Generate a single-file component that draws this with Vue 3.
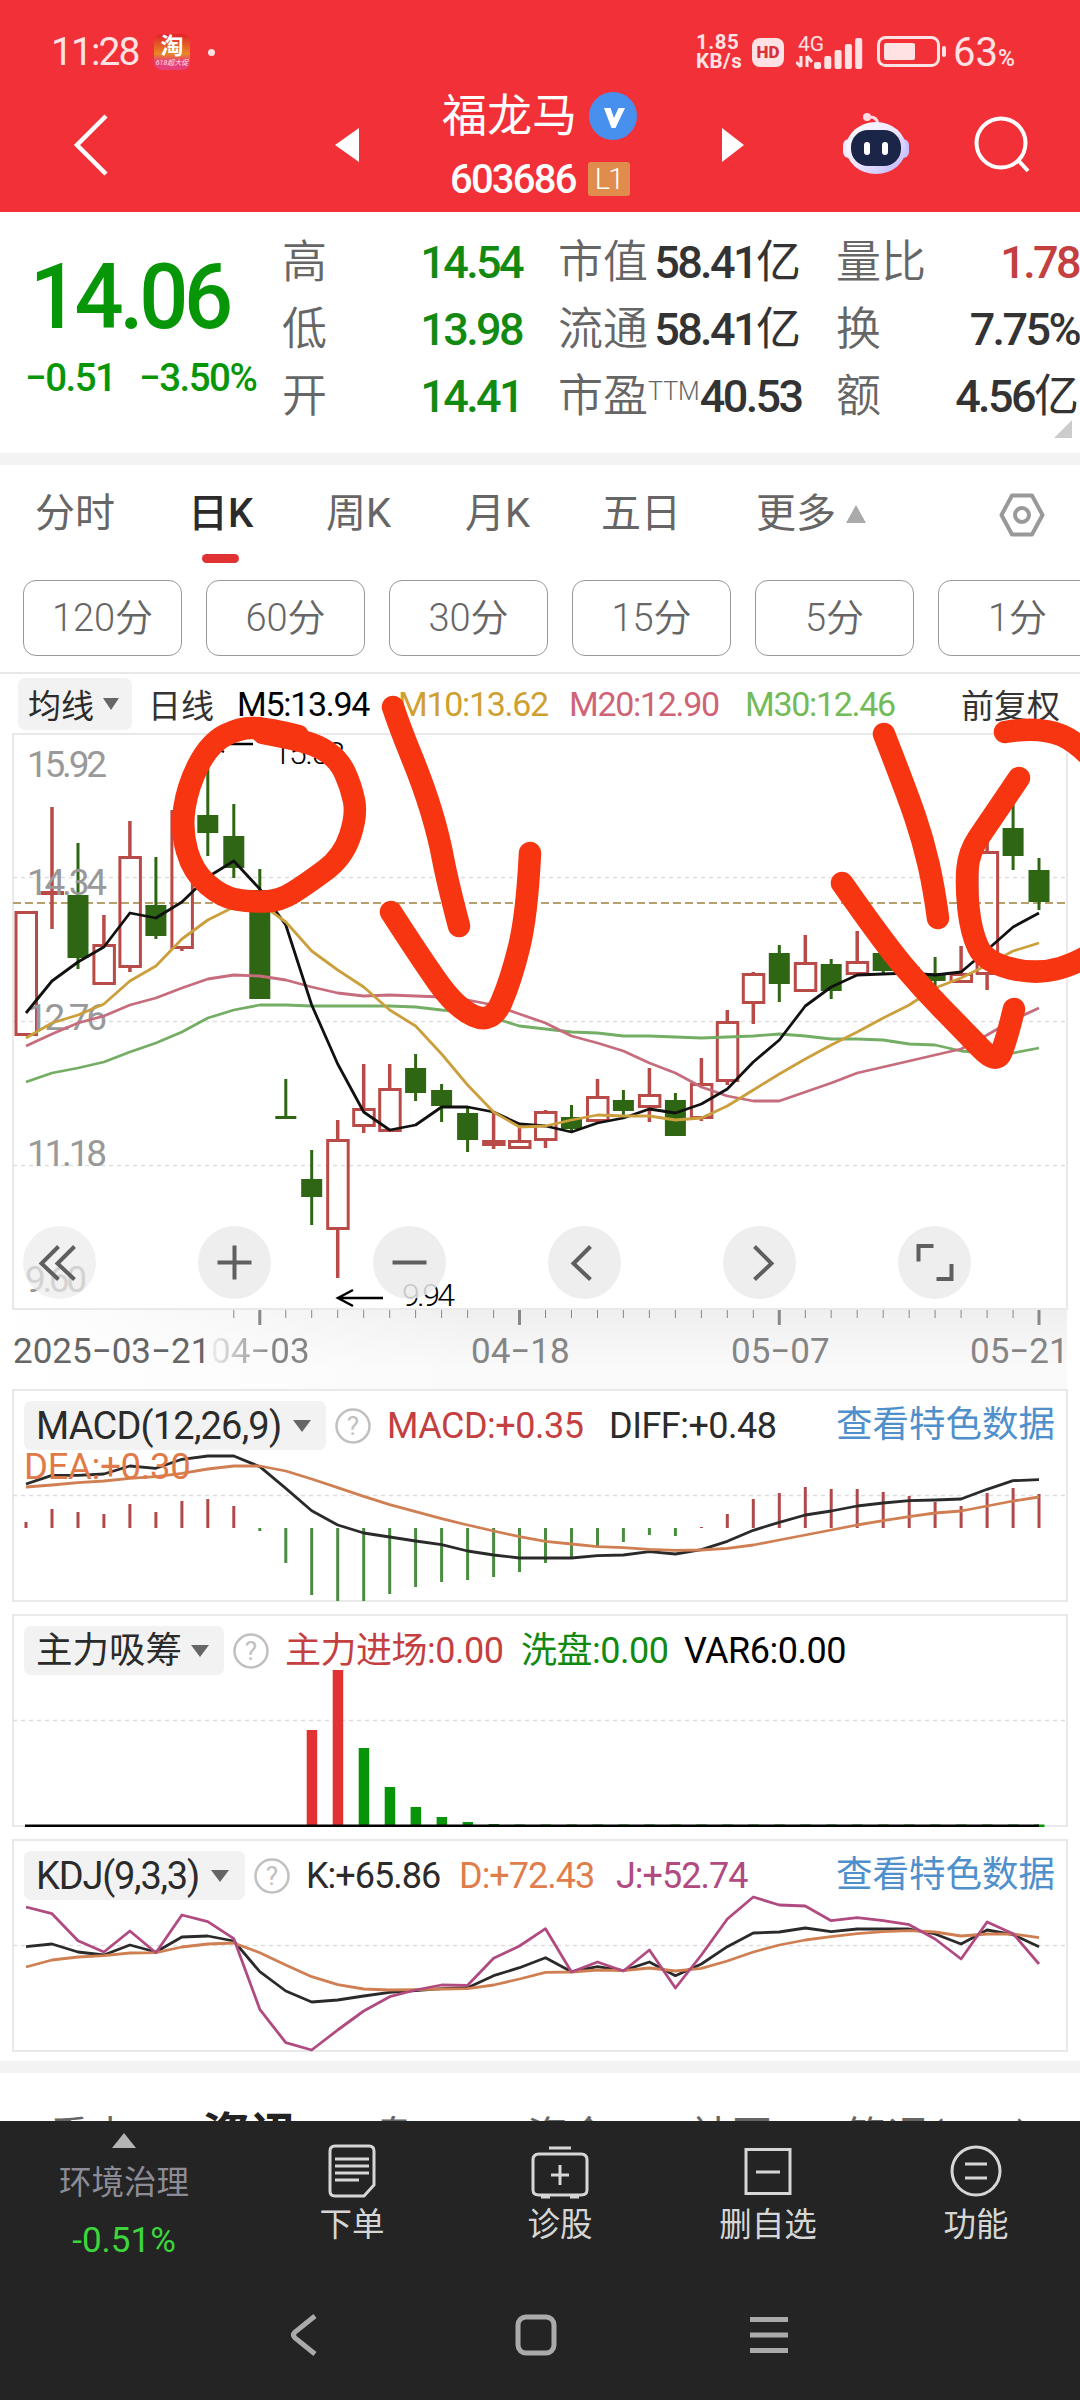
<template>
  <div class="page">
    <!-- Status bar + title -->
    <header class="header">
      <div class="status">
        <span class="clock">11:28</span>
        <span class="taobao"><b>淘</b><i>618超大促</i></span>
        <span class="dot"></span>
        <span class="speed">1.85<br />KB/s</span>
        <span class="hd">HD</span>
        <svg class="signal" width="68" height="36" viewBox="0 0 68 36">
          <text x="2" y="17" class="fourg" textLength="26">4G</text>
          <path d="M5 22v11M0 28l5 5M11 33V22M11 22l5 6" stroke="#ffe3e4" stroke-width="3" fill="none" />
          <rect v-for="(h, i) in [7, 13, 19, 25, 31]" :key="i" :x="18 + i * 10.3" :y="35 - h" width="7" :height="h" rx="2" fill="#ffe3e4" />
        </svg>
        <svg class="battery" width="70" height="32" viewBox="0 0 70 32">
          <rect x="1.5" y="1.5" width="60" height="28" rx="7" fill="none" stroke="#ffe3e4" stroke-width="3" />
          <rect x="7" y="7" width="31" height="17" rx="2" fill="#ffe3e4" />
          <rect x="65" y="10" width="4" height="11" rx="2" fill="#ffe3e4" />
        </svg>
        <span class="percent">63<small>%</small></span>
      </div>
      <div class="title-row">
        <svg class="back" width="36" height="62" viewBox="0 0 36 62"><path d="M33 2L4 31l29 29" fill="none" stroke="#fff" stroke-width="4.500" /></svg>
        <svg class="prev" width="24" height="34"><path d="M24 0v34L0 17z" fill="#fff" /></svg>
        <div class="stock">
          <div class="name">
            福龙马
            <svg width="48" height="48" viewBox="0 0 48 48">
              <circle cx="24" cy="24" r="24" fill="#4790ee" />
              <path d="M15 16h6.500l3.500 10 4.500-10H36L26.500 36h-4z" fill="#fff" />
            </svg>
          </div>
          <div class="code">603686<span class="level">L1</span></div>
        </div>
        <svg class="next" width="24" height="34"><path d="M0 0v34L22 17z" fill="#fff" /></svg>
        <svg class="robot" width="66" height="62" viewBox="0 0 66 62">
          <defs>
            <linearGradient id="head" x1="0" y1="0" x2="1" y2="1">
              <stop offset="0" stop-color="#fff" />
              <stop offset=".5" stop-color="#eee6ff" />
              <stop offset="1" stop-color="#b9b4fa" />
            </linearGradient>
          </defs>
          <path d="M25 4q9-1 10 7" fill="none" stroke="#ffd9e4" stroke-width="3" />
          <circle cx="24" cy="4" r="4" fill="#ffd9e4" />
          <rect x="0" y="26" width="12" height="19" rx="6" fill="#f3e9ff" />
          <rect x="54" y="26" width="12" height="19" rx="6" fill="#c9c2ff" />
          <ellipse cx="33" cy="35" rx="30" ry="26" fill="url(#head)" />
          <rect x="8" y="17" width="50" height="36" rx="17" fill="#1b2547" />
          <rect x="21" y="29" width="6" height="13" rx="3" fill="#fff" />
          <rect x="39" y="29" width="6" height="13" rx="3" fill="#fff" />
        </svg>
        <svg class="search" width="56" height="58" viewBox="0 0 56 58">
          <circle cx="27" cy="27" r="24.5" fill="none" stroke="#fff" stroke-width="4" />
          <path d="M44 44l10 11" stroke="#fff" stroke-width="4" />
        </svg>
      </div>
    </header>

    <!-- Quote -->
    <section class="quote">
      <div class="price">
        <div class="last">14.06</div>
        <div class="change"><span>−0.51</span><span>−3.50%</span></div>
      </div>
      <dl v-for="(col, c) in quote" :key="c" class="quote-col">
        <div v-for="q in col" :key="q.label" class="quote-cell">
          <dt>{{ q.label }}<sup v-if="q.sup">{{ q.sup }}</sup></dt>
          <dd :class="q.color">{{ q.value }}<em v-if="q.unit">{{ q.unit }}</em></dd>
        </div>
      </dl>
      <svg class="corner" width="18" height="18"><path d="M18 0v18H0z" fill="#ccc" /></svg>
    </section>

    <!-- Chart tabs -->
    <nav class="tabs">
      <span v-for="t in tabs" :key="t" :class="{ active: t === '日K' }">{{ t }}</span>
      <span class="more">更多<svg width="20" height="18"><path d="M10 0l10 18H0z" fill="#aaa" /></svg></span>
      <svg class="settings" width="46" height="44" viewBox="0 0 46 44">
        <path d="M13 2.500h20L43.500 22 33 41.500H13L2.500 22z" fill="none" stroke="#999" stroke-width="4" stroke-linejoin="round" />
        <circle cx="23" cy="22" r="7" fill="none" stroke="#999" stroke-width="4" />
      </svg>
    </nav>
    <div class="periods">
      <button v-for="p in periods" :key="p">{{ p }}</button>
    </div>

    <!-- Moving averages -->
    <div class="ma-row">
      <span class="chip small">均线<svg width="16" height="12"><path d="M0 0h16L8 12z" fill="#666" /></svg></span>
      <span class="ma-name">日线</span>
      <span class="ma black">M5:13.94</span>
      <span class="ma yellow">M10:13.62</span>
      <span class="ma pink">M20:12.90</span>
      <span class="ma light-green">M30:12.46</span>
      <span class="fq">前复权</span>
    </div>

    <!-- Candles -->
    <div class="main-chart">
      <svg width="1080" height="578" viewBox="0 733 1080 578">
        <path d="M13 734H1067V1309H13z" fill="none" stroke="#e9e9e9" stroke-width="2" />
        <path d="M13 877.500H1066M13 1021.500H1066M13 1165.500H1066" class="grid" />
        <path d="M13 903H1066" stroke="#b8a06c" stroke-width="2" stroke-dasharray="8 4" />
        <g v-for="(k, i) in candles" :key="i">
          <template v-if="k[0] === 'r'">
            <path :d="`M${x(i)} ${k[1]}V${k[3]}M${x(i)} ${k[4]}V${k[2]}`" stroke="#b84a48" stroke-width="3.500" />
            <rect :x="x(i) - 10" :y="k[3] + 1.5" width="20.500" :height="Math.max(k[4] - k[3] - 3, 1)" :fill="i === 18 ? '#d93a3a' : 'none'" stroke="#b84a48" stroke-width="3" />
          </template>
          <template v-else>
            <path :d="`M${x(i)} ${k[1]}V${k[2]}`" stroke="#2f6614" stroke-width="3" />
            <rect :x="x(i) - 10.5" :y="k[3]" width="21" :height="k[4] - k[3]" fill="#2f6614" />
          </template>
        </g>
        <g class="scale">
          <text x="27" y="777" textLength="80">15.92</text>
          <text x="27" y="895" textLength="80">14.34</text>
          <text x="27" y="1030" textLength="80">12.76</text>
          <text x="27" y="1166" textLength="80">11.18</text>
          <text x="25" y="1292" textLength="62">9.60</text>
        </g>
        <path :d="line(ma30)" class="curve" stroke="#74ad64" />
        <path :d="line(ma20)" class="curve" stroke="#c66c7c" />
        <path :d="line(ma5)" class="curve" stroke="#111" />
        <path :d="line(ma10)" class="curve" stroke="#cb9f3c" />
        <g class="mark">
          <path d="M253 744H208M224 736l-16 8 16 8M383 1298H338M353 1290l-15 8 15 8" fill="none" stroke="#000" stroke-width="2.500" />
          <text x="273" y="764" textLength="72">15.58</text>
          <text x="402" y="1306" textLength="53">9.94</text>
        </g>
      </svg>
      <div class="controls">
        <svg v-for="(d, i) in controls" :key="i" width="73" height="73" viewBox="-36.5 -36.5 73 73">
          <circle r="36.500" fill="#ebebeb" :fill-opacity="i === 0 ? 0.7 : 0.85" />
          <path :d="d" fill="none" stroke="#5f5f5f" stroke-width="4" />
        </svg>
      </div>
    </div>

    <!-- Date axis -->
    <div class="axis">
      <svg width="1080" height="16">
        <path v-for="i in 32" :key="i" :d="`M${x(i + 7)} 0v${i % 10 === 2 ? 16 : 9}`" stroke="#888" :stroke-width="i % 10 === 2 ? 3 : 1" />
      </svg>
      <div class="dates">
        <span class="first">2025−03−21</span>
        <span class="fade">04−03</span>
        <span>04−18</span>
        <span class="may">05−07</span>
        <span>05−21</span>
      </div>
    </div>

    <!-- Indicators -->
    <section v-for="p in panels" :key="p.name" class="panel">
      <svg class="plot" width="1080" height="213">
        <path d="M13 1H1067V212H13z" fill="none" stroke="#e9e9e9" stroke-width="2" />
        <path d="M13 106.500H1066" class="grid" />
        <rect v-for="(b, i) in p.bars" :key="i" :x="b.x" :y="b.y" :width="b.w" :height="b.h" :fill="b.color" />
        <path v-for="(l, i) in p.lines" :key="'l' + i" :d="l.d" class="curve" :stroke="l.color" />
      </svg>
      <div class="legend">
        <span class="chip" :class="p.cls">{{ p.name }}<svg width="18" height="12"><path d="M0 0h18L9 12z" fill="#666" /></svg></span>
        <svg class="help" width="36" height="36" viewBox="0 0 36 36">
          <circle cx="18" cy="18" r="16.500" fill="none" stroke="#c0c0c0" stroke-width="2.500" />
          <text x="18" y="27" text-anchor="middle" fill="#c0c0c0" font-size="26">?</text>
        </svg>
        <span v-for="v in p.values" :key="v.text" class="value" :class="v.cls">{{ v.text }}</span>
        <a v-if="p.link">查看特色数据</a>
      </div>
      <div v-if="p.second" class="second">{{ p.second }}</div>
    </section>

    <!-- News tabs, cut by the toolbar -->
    <div class="news">
      <span v-for="n in news" :key="n" :class="{ active: n === '资讯' }">{{ n }}</span>
    </div>

    <footer class="toolbar">
      <div class="actions">
        <div class="sector">
          <svg width="24" height="15"><path d="M12 0l12 15H0z" fill="#b4b4b4" /></svg>
          <span>环境治理</span>
          <b>-0.51%</b>
        </div>
        <div v-for="a in actions" :key="a.text" class="action">
          <svg width="60" height="56" viewBox="-30 -28 60 56"><path :d="a.icon" fill="none" stroke="#d6d6d6" stroke-width="3" /></svg>
          <span>{{ a.text }}</span>
        </div>
      </div>
      <div class="sysnav">
        <svg width="28" height="42" viewBox="0 0 28 42"><path d="M25 2L5 18q-3 3 0 6l20 16" fill="none" stroke="#aaa" stroke-width="5" /></svg>
        <svg width="42" height="42" viewBox="0 0 42 42"><rect x="3" y="3" width="36" height="36" rx="8" fill="none" stroke="#aaa" stroke-width="5" /></svg>
        <svg width="40" height="42" viewBox="0 0 40 42"><path d="M1 5.500h38M1 21h38M1 36.500h38" stroke="#aaa" stroke-width="5" /></svg>
      </div>
    </footer>

    <!-- Freehand pen marks over the chart -->
    <svg class="pen" width="1080" height="400" viewBox="0 690 1080 400">
      <path v-for="(s, i) in strokes" :key="i" :d="smooth(s)" />
    </svg>
  </div>
</template>

<script setup>
const x = (i) => +(26 + i * 25.975).toFixed(1);

const line = (values, top = 0, k = 1) =>
  values.map((v, i) => `${i ? "L" : "M"}${x(i)} ${(v * k - top).toFixed(1)}`).join("");

// curve through the middle of each pair of points
const smooth = (pts) => {
  let d = `M${pts[0]}`;
  for (let i = 1; i < pts.length - 1; i++) {
    const end =
      i === pts.length - 2
        ? pts[i + 1]
        : [(pts[i][0] + pts[i + 1][0]) / 2, (pts[i][1] + pts[i + 1][1]) / 2];
    d += `Q${pts[i]} ${end}`;
  }
  return d;
};

const quote = [
  [
    { label: "高", value: "14.54", color: "green" },
    { label: "低", value: "13.98", color: "green" },
    { label: "开", value: "14.41", color: "green" },
  ],
  [
    { label: "市值", value: "58.41", unit: "亿" },
    { label: "流通", value: "58.41", unit: "亿" },
    { label: "市盈", sup: "TTM", value: "40.53" },
  ],
  [
    { label: "量比", value: "1.78", color: "red" },
    { label: "换", value: "7.75%" },
    { label: "额", value: "4.56", unit: "亿" },
  ],
];
const tabs = ["分时", "日K", "周K", "月K", "五日"];
const periods = ["120分", "60分", "30分", "15分", "5分", "1分"];
const news = ["重点", "资讯", "盘口", "资金", "社区", "简况(F10)"];

// [colour, high, low, body top, body bottom]
const candles = [
  ["r", 911, 1036, 911, 1036],
  ["r", 807, 929, 891, 895],
  ["g", 843, 969, 895, 958],
  ["r", 915, 985, 944, 985],
  ["r", 821, 972, 856, 968],
  ["g", 857, 939, 905, 936],
  ["r", 795, 951, 810, 949],
  ["g", 764, 856, 815, 833],
  ["g", 804, 878, 836, 868],
  ["g", 869, 999, 890, 999],
  ["g", 1079, 1118, 1116, 1119],
  ["g", 1150, 1225, 1179, 1197],
  ["r", 1120, 1278, 1139, 1230],
  ["r", 1064, 1133, 1108, 1127],
  ["r", 1064, 1132, 1088, 1132],
  ["g", 1054, 1101, 1068, 1093],
  ["g", 1084, 1122, 1090, 1106],
  ["g", 1107, 1152, 1113, 1140],
  ["r", 1113, 1149, 1140, 1146],
  ["r", 1127, 1149, 1140, 1149],
  ["r", 1110, 1148, 1111, 1141],
  ["g", 1105, 1131, 1117, 1129],
  ["r", 1079, 1122, 1096, 1122],
  ["g", 1090, 1115, 1100, 1111],
  ["r", 1068, 1122, 1094, 1108],
  ["g", 1093, 1136, 1100, 1136],
  ["r", 1058, 1121, 1083, 1119],
  ["r", 1010, 1085, 1021, 1082],
  ["r", 972, 1024, 973, 1004],
  ["g", 945, 1002, 953, 984],
  ["r", 935, 992, 962, 992],
  ["g", 959, 999, 964, 991],
  ["r", 931, 975, 961, 975],
  ["g", 945, 973, 953, 971],
  ["g", 960, 974, 967, 973],
  ["g", 957, 986, 973, 981],
  ["r", 946, 983, 973, 983],
  ["r", 840, 990, 851, 975],
  ["g", 800, 870, 828, 856],
  ["g", 858, 910, 870, 902],
];
const ma5 = [1013, 981, 962, 947, 913, 918, 902, 877, 861, 889, 925, 1005, 1064, 1112, 1130, 1125, 1107, 1107, 1112, 1124, 1126, 1132, 1123, 1118, 1109, 1113, 1104, 1089, 1062, 1040, 1006, 987, 975, 974, 973, 975, 972, 950, 927, 913];
const ma10 = [1038, 1023, 1015, 1004, 981, 966, 939, 920, 907, 903, 922, 951, 970, 987, 1010, 1026, 1054, 1085, 1112, 1127, 1126, 1120, 1115, 1116, 1116, 1120, 1118, 1106, 1090, 1074, 1059, 1045, 1032, 1018, 1005, 988, 978, 965, 951, 943];
const ma20 = [1046, 1034, 1023, 1016, 1005, 998, 988, 979, 975, 976, 980, 987, 993, 996, 995, 996, 997, 1000, 1005, 1014, 1023, 1036, 1043, 1051, 1063, 1073, 1087, 1096, 1101, 1101, 1092, 1083, 1073, 1067, 1061, 1055, 1049, 1035, 1020, 1008];
const ma30 = [1082, 1073, 1068, 1062, 1052, 1043, 1032, 1018, 1010, 1005, 1005, 1006, 1006, 1006, 1006, 1007, 1010, 1012, 1018, 1026, 1029, 1032, 1033, 1036, 1036, 1037, 1038, 1037, 1036, 1034, 1036, 1039, 1039, 1040, 1044, 1045, 1051, 1053, 1053, 1048];

const controls = [
  "M-1-16L-18 1L-1 17M15-16L-2 1L15 17",
  "M-17 0H17M0-17V17",
  "M-17 0H17",
  "M6-16L-11 1L6 17",
  "M-5-16L12 1L-5 17",
  "M-1-16.500H-16V-1M17 1.500V16.500H2",
];

// MACD: bar ends, zero line at 139
const macdEnds = [133, 120, 123, 125, 115, 123, 112, 110, 117, 142, 174, 206, 212, 212, 205, 198, 193, 191, 188, 183, 174, 169, 158, 153, 146, 147, 138, 125, 110, 104, 98, 100, 100, 103, 107, 113, 117, 104, 99, 105];
const diff = [312, 286, 286, 282, 258, 265, 238, 228, 228, 260, 325, 392, 435, 459, 471, 483, 494, 513, 525, 534, 534, 534, 527, 525, 515, 522, 509, 484, 451, 427, 405, 393, 378, 369, 362, 360, 357, 328, 302, 299];
const dea = [321, 315, 308, 303, 295, 290, 280, 267, 258, 258, 273, 297, 323, 349, 374, 395, 416, 435, 453, 470, 484, 492, 500, 503, 508, 511, 510, 505, 495, 480, 465, 450, 435, 422, 410, 399, 393, 378, 363, 351];

const zhuli = [97, 157, 79, 40, 20, 10, 5, 3];

const kLine = [350, 342, 366, 375, 345, 366, 321, 318, 333, 425, 483, 516, 510, 498, 487, 482, 476, 473, 437, 413, 383, 425, 410, 422, 396, 437, 402, 350, 309, 306, 294, 305, 297, 297, 297, 312, 342, 300, 314, 350];
const dLine = [411, 390, 381, 377, 369, 368, 351, 342, 339, 368, 405, 440, 464, 477, 480, 479, 477, 476, 465, 447, 427, 426, 420, 422, 414, 423, 415, 393, 366, 345, 330, 320, 311, 305, 302, 306, 318, 312, 312, 323];
const jLine = [231, 251, 332, 366, 303, 368, 255, 275, 326, 538, 638, 660, 600, 543, 500, 480, 465, 466, 385, 348, 296, 426, 396, 423, 360, 474, 375, 267, 201, 225, 228, 272, 263, 272, 284, 327, 387, 276, 311, 402];

const panels = [
  {
    name: "MACD(12,26,9)",
    cls: "macd",
    link: true,
    second: "DEA:+0.30",
    values: [
      { text: "MACD:+0.35", cls: "red v-macd" },
      { text: "DIFF:+0.48", cls: "dark v-diff" },
    ],
    bars: macdEnds.map((y, i) => ({
      x: x(i) - 1.5,
      y: Math.min(y, 139),
      w: 3,
      h: Math.abs(y - 139),
      color: y < 139 ? "#b04a4a" : "#4b8c42",
    })),
    lines: [
      { d: line(diff, 9, 1 / 3), color: "#2a2a2a" },
      { d: line(dea, 9, 1 / 3), color: "#cf7f52" },
    ],
  },
  {
    name: "主力吸筹",
    cls: "zhuli",
    values: [
      { text: "主力进场:0.00", cls: "red v-in" },
      { text: "洗盘:0.00", cls: "green v-wash" },
      { text: "VAR6:0.00", cls: "black v-var" },
    ],
    bars: Array.from({ length: 29 }, (_, n) => {
      const h = zhuli[n] ?? 2.5;
      return { x: x(n + 11) - 5, y: 213 - h, w: 10.5, h, color: n < 2 ? "#e23232" : "#089408" };
    }),
    lines: [{ d: "M25 212H1039", color: "#000" }],
  },
  {
    name: "KDJ(9,3,3)",
    cls: "kdj",
    link: true,
    values: [
      { text: "K:+65.86", cls: "dark v-k" },
      { text: "D:+72.43", cls: "orange v-d" },
      { text: "J:+52.74", cls: "purple v-j" },
    ],
    bars: [],
    lines: [
      { d: line(kLine, 9, 1 / 3), color: "#2a2a2a" },
      { d: line(dLine, 9, 1 / 3), color: "#cf7f52" },
      { d: line(jLine, 9, 1 / 3), color: "#b04a80" },
    ],
  },
];

const actions = [
  { text: "下单", icon: "M-17-25H17Q22-25 22-20V14L12 25H-17Q-22 25-22 20V-20Q-22-25-17-25zM-17-12H17M-17-5H17M-17 2H17M-17 9H7" },
  { text: "诊股", icon: "M-21-17H21Q27-17 27-11V19Q27 24 21 24H-21Q-27 24-27 19V-11Q-27-17-21-17zM-11-23H11M-9 4H9M0-6V14M-19 26H-10M10 26H19" },
  { text: "删自选", icon: "M-22-21.500H22V22.500H-22zM-12 1H12" },
  { text: "功能", icon: "M-24 0a24 24 0 1 1 48 0a24 24 0 1 1-48 0M-11-7H11M-11 7H11" },
];

const strokes = [
  [[298, 736], [270, 729], [241, 727], [210, 743], [188, 785], [181, 830], [193, 872], [222, 897], [250, 902], [280, 901], [308, 883], [343, 857], [357, 815], [351, 786], [339, 760], [317, 745], [289, 738], [263, 733]],
  [[393, 707], [400, 728], [424, 787], [439, 837], [447, 880], [459, 926]],
  [[391, 912], [420, 957], [456, 1008], [492, 1024], [511, 980], [527, 915], [530, 853]],
  [[884, 734], [907, 793], [923, 840], [934, 888], [938, 918]],
  [[842, 883], [884, 943], [922, 988], [967, 1034], [996, 1064], [1006, 1042], [1014, 1009]],
  [[1019, 778], [987, 825], [969, 852], [966, 885], [971, 932], [985, 962], [1037, 975], [1084, 961], [1140, 920], [1150, 830], [1084, 745], [1040, 726], [1005, 732]],
];
</script>

<style>
body {
  margin: 0;
  background: #fff;
}
</style>

<style scoped>
.page {
  position: relative;
  width: 1080px;
  height: 2400px;
  overflow: hidden;
  display: flex;
  flex-direction: column;
  background: #fff;
  color: #333;
  font-family: Roboto, "Noto Sans CJK SC", sans-serif;
}
.page > * {
  flex: none;
}
svg {
  display: block;
}

.header {
  height: 212px;
  background: #f23037;
  color: #fff;
}
.status {
  height: 104px;
  display: flex;
  align-items: center;
  color: #ffe3e4;
}
.clock {
  width: 103px;
  margin-left: 51px;
  font-size: 39px;
  letter-spacing: -1.9px;
}
.taobao {
  width: 36px;
  height: 36px;
  border-radius: 8px;
  background: linear-gradient(#e0202a, #e88a24 55%, #e8407a 75%);
  display: flex;
  flex-direction: column;
  align-items: center;
  overflow: hidden;
  white-space: nowrap;
}
.taobao b {
  font-size: 23px;
  line-height: 25px;
  color: #fff;
}
.taobao i {
  font-size: 7px;
  line-height: 9px;
}
.dot {
  width: 7px;
  height: 7px;
  border-radius: 50%;
  background: #ffe3e4;
  margin: 0 481px 0 18px;
}
.speed {
  width: 56px;
  font-size: 20.500px;
  line-height: 19px;
  font-weight: 700;
  letter-spacing: 0.5px;
}
.hd {
  width: 32px;
  height: 29px;
  border-radius: 8px;
  background: #ffe3e4;
  color: #d8323a;
  font-size: 17px;
  font-weight: 900;
  line-height: 29px;
  text-align: center;
}
.signal {
  margin: 0 13px 0 12px;
}
.fourg {
  font-size: 21px;
  fill: #ffe3e4;
}
.percent {
  margin-left: 6px;
  font-size: 40px;
}
.percent small {
  font-size: 23px;
  font-weight: 500;
}

.title-row {
  height: 108px;
  display: flex;
  align-items: center;
}
.back {
  margin: -26px 0 0 73px;
}
.prev {
  margin: -26px 0 0 226px;
}
.stock {
  width: 363px;
  margin-top: -22px;
}
.name {
  height: 64px;
  display: flex;
  align-items: center;
  gap: 12px;
  padding-left: 83px;
  font-size: 45px;
  line-height: 64px;
}
.name svg {
  margin-top: -3px;
}
.code {
  display: flex;
  align-items: center;
  gap: 12px;
  padding-left: 91px;
  height: 60px;
  font-size: 40px;
  font-weight: 500;
  letter-spacing: -1.8px;
}
.level {
  width: 42px;
  height: 34px;
  line-height: 34px;
  border-radius: 3px;
  background: #e08c4c;
  text-align: center;
  font-size: 29px;
  font-weight: 300;
}
.next {
  margin-top: -26px;
}
.robot {
  margin: -28px 0 0 97px;
}
.search {
  margin: -26px 0 0 65px;
}

.quote {
  position: relative;
  height: 241px;
  display: flex;
  border-bottom: 12px solid #f3f3f3;
}
.price {
  width: 282px;
  color: #079607;
}
.last {
  padding: 45px 0 0 30px;
  font-size: 91px;
  line-height: 80px;
  font-weight: 500;
  transform: scaleX(0.95);
  transform-origin: 25px 0;
  letter-spacing: -4.5px;
}
.change {
  display: flex;
  padding: 19px 0 0 25px;
  font-size: 38.500px;
  font-weight: 500;
  line-height: 44px;
  letter-spacing: -1.5px;
}
.change span:first-child {
  width: 114px;
}
.quote-col {
  margin: 0;
  padding-top: 17px;
}
.quote-col:nth-child(2) {
  width: 240px;
  margin-right: 36px;
}
.quote-col:nth-child(3) {
  width: 243px;
  margin-right: 35px;
}
.quote-col:nth-child(4) {
  width: 243px;
}
.quote-cell {
  height: 67px;
  display: flex;
  align-items: center;
  justify-content: space-between;
  white-space: nowrap;
}
dt {
  color: #666;
  font-size: 45px;
  font-weight: 350;
  line-height: 67px;
}
dt sup {
  font-size: 25px;
  line-height: 0;
  vertical-align: 12px;
}
dd {
  margin: 0;
  font-size: 45px;
  line-height: 67px;
  font-weight: 500;
  letter-spacing: -2.6px;
}
dd em {
  font-style: normal;
  font-weight: 400;
  letter-spacing: 0;
}
.corner {
  position: absolute;
  right: 8px;
  bottom: 15px;
}

.tabs {
  height: 115px;
  box-sizing: border-box;
  display: grid;
  grid-template-columns: 153px 138px 139px 136px 155px 243px 46px;
  padding: 17px 0 0 35px;
  font-size: 40px;
  line-height: 64px;
  color: #666;
}
.tabs .active {
  color: #2b2b2b;
  font-weight: 500;
}
.tabs .active::after {
  content: "";
  display: block;
  width: 37px;
  height: 9px;
  margin: 8px 0 0 14px;
  border-radius: 5px;
  background: #e03232;
}
.more {
  display: flex;
  align-items: center;
  gap: 10px;
  height: 64px;
}
.settings {
  margin-top: 11px;
}

.periods {
  height: 94px;
  box-sizing: border-box;
  padding-left: 23px;
  display: flex;
  gap: 24px;
  overflow: hidden;
  border-bottom: 2px solid #e8e8e8;
}
.periods button {
  flex: none;
  width: 159px;
  height: 76px;
  padding: 0;
  border: 1.5px solid #999;
  border-radius: 13px;
  background: #fff;
  color: #666;
  font: 350 38px/73px Roboto, "Noto Sans CJK SC", sans-serif;
}

.ma-row {
  height: 59px;
  display: flex;
  align-items: center;
  font-size: 33px;
  white-space: nowrap;
}
.chip {
  display: flex;
  align-items: center;
  box-sizing: border-box;
  height: 49px;
  padding-left: 12px;
  gap: 12px;
  border-radius: 7px;
  background: #f2f2f2;
  color: #2b2b2b;
  white-space: nowrap;
}
.chip.small {
  width: 114px;
  height: 52px;
  margin-left: 18px;
  padding-left: 10px;
  gap: 9px;
}
.ma-name {
  width: 89px;
  margin-left: 16px;
}
.ma {
  font-size: 34px;
  letter-spacing: -1.3px;
}
.ma.black {
  width: 161px;
}
.ma.yellow {
  width: 171px;
}
.ma.pink {
  width: 176px;
}
.ma.light-green {
  width: 216px;
}

.main-chart {
  position: relative;
  height: 576px;
}
.grid {
  fill: none;
  stroke: #dedede;
  stroke-width: 1.5;
  stroke-dasharray: 4 4;
}
.curve {
  fill: none;
  stroke-width: 2.8;
  stroke-linejoin: round;
}
.scale {
  font-size: 37px;
  font-weight: 450;
  fill: #999;
}
.mark text {
  font-size: 32px;
  font-weight: 300;
}
.controls {
  position: absolute;
  left: 23px;
  top: 493px;
  display: flex;
  gap: 102px;
}

.axis {
  height: 80px;
  margin-right: 13px;
  background: linear-gradient(90deg, #fff, rgba(255, 255, 255, 0) 45%), linear-gradient(#efefef, #fafafa 75%);
}
.axis svg {
  overflow: visible;
}
.dates {
  display: flex;
  padding: 2px 0 0 13px;
  font-size: 35px;
  line-height: 50px;
  color: #858585;
  white-space: nowrap;
}
.dates span {
  flex: none;
  width: 260px;
}
.dates .may {
  width: 239px;
}
.dates .first {
  width: 198px;
  color: #666;
}
.dates .fade {
  background: linear-gradient(90deg, #eee, #858585 60px);
  background-clip: text;
  color: transparent;
}

.panel {
  position: relative;
  height: 213px;
  margin-bottom: 12px;
}
.plot {
  position: absolute;
  left: 0;
  top: 0;
}
.legend {
  position: relative;
  display: flex;
  align-items: center;
  height: 49px;
  padding: 12px 25px 0 24px;
  font-size: 38px;
  line-height: 46px;
  white-space: nowrap;
}
.legend a {
  margin-left: auto;
  margin-top: -2px;
  font-size: 36.500px;
  color: #4f90cc;
}
.chip.macd {
  width: 302px;
  letter-spacing: -0.8px;
}
.chip.zhuli {
  width: 200px;
  font-size: 36.500px;
  gap: 9px;
}
.chip.kdj {
  width: 221px;
  letter-spacing: -1.2px;
}
.help {
  margin: 0 16px 0 9px;
}
.value {
  font-size: 36px;
  letter-spacing: -0.5px;
}
.v-macd {
  width: 222px;
}
.v-in {
  width: 236px;
}
.v-wash {
  width: 163px;
}
.v-k {
  width: 153px;
}
.v-d {
  width: 157px;
}
.v-k,
.v-d,
.v-j {
  letter-spacing: -1px;
}
.second {
  position: relative;
  padding-left: 24px;
  margin-top: -5px;
  font-size: 36.500px;
  line-height: 44px;
  letter-spacing: -0.3px;
  color: #e07a48;
}

.black {
  color: #000;
}
.dark {
  color: #2b2b2b;
}
.red {
  color: #c43f3f;
}
.green {
  color: #128a12;
}
.yellow {
  color: #cfa030;
}
.pink {
  color: #cf6477;
}
.light-green {
  color: #72bb58;
}
.orange {
  color: #df7d4c;
}
.purple {
  color: #b04a80;
}

.news {
  height: 60px;
  margin-top: -3px;
  box-sizing: border-box;
  display: grid;
  grid-template-columns: 153px 171px 154px 163px 155px 1fr;
  padding: 34px 0 0 49px;
  border-top: 12px solid #f3f3f3;
  overflow: hidden;
  font-size: 41px;
  line-height: 60px;
  color: #666;
}
.news .active {
  font-size: 48px;
  font-weight: 700;
  line-height: 58px;
  color: #222;
}
.news span:last-child {
  letter-spacing: 1.2px;
}

.toolbar {
  height: 279px;
  position: relative;
  background: #242424;
}
.actions {
  display: grid;
  grid-template-columns: 248px repeat(4, 208px);
  height: 180px;
  font-size: 32.500px;
  color: #d6d6d6;
}
.sector {
  display: flex;
  flex-direction: column;
  align-items: center;
  padding-top: 12px;
  color: #8c8c96;
}
.sector span {
  line-height: 44px;
  margin-top: 13px;
}
.sector b {
  margin-top: 16px;
  font-size: 35px;
  line-height: 40px;
  font-weight: 400;
  color: #3cd63c;
}
.action {
  display: flex;
  flex-direction: column;
  align-items: center;
  padding-top: 22px;
}
.action span {
  line-height: 46px;
  margin-top: 3px;
}
.sysnav {
  display: flex;
  padding: 13px 0 0 290px;
}
.sysnav svg:nth-child(2) {
  margin: 0 192px 0 197px;
}

.pen {
  position: absolute;
  left: 0;
  top: 690px;
  fill: none;
  stroke: #f73510;
  stroke-width: 22.500;
  stroke-linecap: round;
  stroke-linejoin: round;
}
</style>
